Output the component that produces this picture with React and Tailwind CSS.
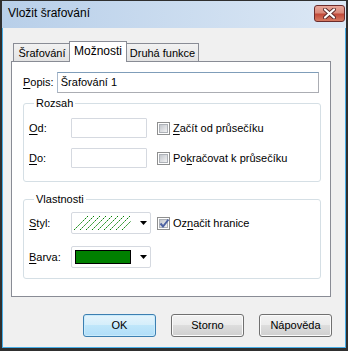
import React from "react";

function Checkbox({ checked }) {
  return (
    <div className="w-[13px] h-[13px] border border-[#8e8f8f] bg-white p-px shrink-0">
      <div className="w-full h-full bg-gradient-to-br from-[#c3c7cd] to-[#f2f2f3] border border-[#aeb2b8] relative">
        {checked && (
          <svg className="absolute left-[-1px] top-[-2px]" width="11" height="11" viewBox="0 0 11 11">
            <path d="M1.5 5.5 L4 8.5 L9.5 1.5" fill="none" stroke="#4d62a2" strokeWidth="2" />
          </svg>
        )}
      </div>
    </div>
  );
}

function U({ children }) {
  return <span className="underline underline-offset-[2px]">{children}</span>;
}

function Arrow() {
  return (
    <svg width="7" height="4" viewBox="0 0 7 4" className="shrink-0">
      <path d="M0 0 H7 L3.5 4 Z" fill="#000" />
    </svg>
  );
}

function Button({ children, primary }) {
  return (
    <div
      className={
        "w-[73px] h-[23px] rounded-[3px] border flex items-center justify-center " +
        (primary
          ? "border-[#3c7fb1] bg-[linear-gradient(#e5f4fc_0%,#d4eefb_50%,#bfe6fa_50%,#b1def9_100%)] shadow-[inset_0_0_0_1px_#c9ebfc]"
          : "border-[#707070] bg-[linear-gradient(#f2f2f2_0%,#ebebeb_50%,#dddddd_50%,#cfcfcf_100%)] shadow-[inset_0_0_0_1px_#fbfbfb]")
      }
    >
      {children}
    </div>
  );
}

export default function App() {
  return (
    <div className="w-[348px] h-[351px] bg-[#2f2f2f] pt-px pl-[2px] pr-[2px] pb-[3px] font-['Liberation_Sans',sans-serif] text-[11px] text-black leading-[13px]">
      <div className="w-full h-full flex flex-col bg-gradient-to-r from-[#b8cfe9] to-[#dce8f5]">
        {/* Title bar */}
        <div className="h-[27px] flex items-start justify-between pl-[6px] pr-[1px] shrink-0">
          <div className="mt-[5px] text-[12px] leading-[15px] text-[#000]">Vložit šrafování</div>
          <div className="mt-[4px] w-[31px] h-[17px] rounded-[3px] border border-[#6b2c2c] bg-[linear-gradient(#e8a69a_0%,#d98b7c_45%,#c24a3a_55%,#d57a62_100%)] flex items-center justify-center">
            <svg width="13" height="11" viewBox="0 0 13 11">
              <path d="M2 1.5 L11 9.5 M11 1.5 L2 9.5" stroke="#5a2a2a" strokeWidth="4" strokeLinecap="round" />
              <path d="M2 1.5 L11 9.5 M11 1.5 L2 9.5" stroke="#ffffff" strokeWidth="2.2" strokeLinecap="round" />
            </svg>
          </div>
        </div>
        {/* Client */}
        <div className="flex-1 flex flex-col bg-[#f0f0f0] border-l border-r border-b border-[#48ade6]">
          {/* Tabs */}
          <div className="mt-[13px] ml-[10px] flex items-end h-[20px] relative z-10">
            <div className="w-[57px] h-[18px] border border-[#898c95] border-b-0 border-r-0 bg-gradient-to-b from-[#f2f2f2] to-[#e3e3e3] flex items-center justify-center pt-px">
              Šrafování
            </div>
            <div className="w-[58px] h-[21px] -mb-px -ml-px border border-[#898c95] border-b-0 bg-white flex items-center justify-center pb-[2px] text-[12px]">
              Možnosti
            </div>
            <div className="w-[72px] h-[18px] border border-[#898c95] border-b-0 border-l-0 bg-gradient-to-b from-[#f2f2f2] to-[#e3e3e3] flex items-center justify-center pt-px">
              Druhá funkce
            </div>
          </div>
          {/* Panel */}
          <div className="ml-[8px] w-[320px] h-[236px] border border-[#898c95] bg-white px-[11px] flex flex-col">
            <div className="mt-[10px] flex items-center h-[21px]">
              <div className="w-[34px]">
                <U>P</U>opis:
              </div>
              <div className="w-[264px] h-[21px] border border-[#abadb3] border-t-[#7f9db9] border-l-[#a9b9cc] flex items-center pl-[3px] bg-white">
                Šrafování 1
              </div>
            </div>
            {/* Rozsah */}
            <fieldset className="mt-[4px] w-[298px] h-[85px] border border-[#d5dfe5] rounded-[3px] px-[5px]">
              <legend className="ml-[5px] px-[2px] leading-[13px]">Rozsah</legend>
              <div className="mt-[8px] flex items-center h-[20px]">
                <div className="w-[42px]">
                  <U>O</U>d:
                </div>
                <div className="w-[76px] h-[20px] border border-[#d5d9e0] rounded-[1px]" />
                <div className="ml-[10px] flex items-center gap-[3px]">
                  <Checkbox />
                  <span>
                    <U>Z</U>ačít od průsečíku
                  </span>
                </div>
              </div>
              <div className="mt-[10px] flex items-center h-[20px]">
                <div className="w-[42px]">
                  <U>D</U>o:
                </div>
                <div className="w-[76px] h-[20px] border border-[#d5d9e0] rounded-[1px]" />
                <div className="ml-[10px] flex items-center gap-[3px]">
                  <Checkbox />
                  <span>
                    Po<U>k</U>račovat k průsečíku
                  </span>
                </div>
              </div>
            </fieldset>
            {/* Vlastnosti */}
            <fieldset className="mt-[11px] w-[298px] h-[86px] border border-[#d5dfe5] rounded-[3px] px-[5px]">
              <legend className="ml-[5px] px-[2px] leading-[13px]">Vlastnosti</legend>
              <div className="mt-[6px] flex items-center h-[22px]">
                <div className="w-[42px]">
                  <U>S</U>tyl:
                </div>
                <div className="w-[80px] h-[22px] border border-[#d5d9e0] rounded-[2px] flex items-center pl-[2px] pr-[3px] justify-between">
                  <svg width="57" height="16" viewBox="0 0 57 16">
                    {[0, 6, 12, 18, 24, 30, 36, 42, 48].map((x) => (
                      <line key={x} x1={x} y1="15" x2={x + 14} y2="1" stroke="#008000" strokeWidth="1" strokeDasharray="2 1" />
                    ))}
                  </svg>
                  <Arrow />
                </div>
                <div className="ml-[6px] flex items-center gap-[3px]">
                  <Checkbox checked />
                  <span>
                    Oz<U>n</U>ačit hranice
                  </span>
                </div>
              </div>
              <div className="mt-[12px] flex items-center h-[22px]">
                <div className="w-[42px]">
                  <U>B</U>arva:
                </div>
                <div className="w-[80px] h-[22px] border border-[#d5d9e0] rounded-[2px] flex items-center pl-[3px] pr-[3px] justify-between">
                  <div className="w-[56px] h-[14px] border border-black bg-[#008000]" />
                  <Arrow />
                </div>
              </div>
            </fieldset>
          </div>
          {/* Buttons */}
          <div className="mt-[17px] ml-[8px] w-[321px] flex justify-end gap-[15px]">
            <Button primary>OK</Button>
            <Button>Storno</Button>
            <Button>Nápověda</Button>
          </div>
        </div>
      </div>
    </div>
  );
}
